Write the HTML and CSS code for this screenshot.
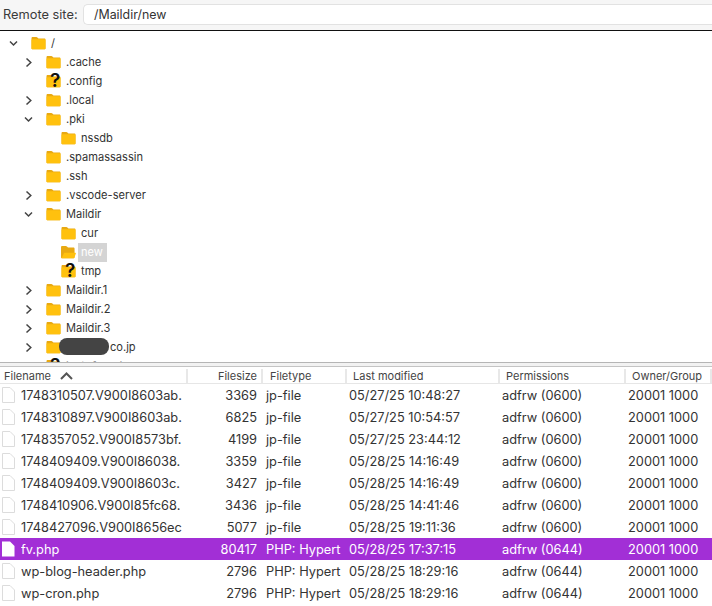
FILE: index.html
```html
<!DOCTYPE html>
<html lang="en">
<head>
<meta charset="UTF-8" />
<meta name="viewport" content="width=device-width, initial-scale=1" />
<title>Remote site</title>
<link rel="stylesheet" href="styles.css">
</head>
<body>

<svg class="defs" width="0" height="0" aria-hidden="true">
  <symbol id="folder" viewBox="0 0 15 15">
    <path d="M0 2.200C0 1.500.5 1 1.200 1h4c.5 0 .8.200 1.100.5L7.500 2.600H13.800c.7 0 1.200.5 1.200 1.200V13c0 .7-.5 1.200-1.200 1.200H1.200C.5 14.200 0 13.700 0 13z" fill="#e8a912"/>
    <path d="M0 4.300C0 3.800.4 3.500.9 3.500H14.100c.5 0 .9.300.9.800V13c0 .7-.5 1.200-1.200 1.200H1.200C.5 14.200 0 13.700 0 13z" fill="#ffc10e"/>
  </symbol>
  <symbol id="folder-open" viewBox="0 0 16 15">
    <path d="M0 2.200C0 1.500.5 1 1.200 1h4c.5 0 .8.200 1.100.5L7.500 2.600H13.300c.7 0 1.200.5 1.200 1.200V13c0 .7-.5 1.200-1.200 1.200H1.200C.5 14.200 0 13.700 0 13z" fill="#e8a912"/>
    <path d="M3.300 8.200H15.300c.5 0 .8.400.6.900L14.300 13.500c-.2.500-.6.700-1.100.7H.6z" fill="#ffc10e"/>
  </symbol>
  <symbol id="doc" viewBox="0 0 14 16">
    <path d="M1.500.5H9L13.500 5V15.500H1.500z" fill="#fff" stroke="#dcdcdc"/>
  </symbol>
  <symbol id="doc-sel" viewBox="0 0 14 16">
    <path d="M1 .5H9L13.500 5V15.500H1z" fill="#fff"/>
  </symbol>
  <symbol id="right" viewBox="0 0 9 11">
    <path d="M2.500 1.500 6.800 5.500 2.500 9.500" fill="none" stroke="#444" stroke-width="1.500"/>
  </symbol>
  <symbol id="down" viewBox="0 0 9 11">
    <path d="M1 3.500 4.500 7 8 3.500" fill="none" stroke="#444" stroke-width="1.500"/>
  </symbol>
</svg>

<div class="sitebar">
  <label class="sitebar-label">Remote site:</label>
  <div class="sitebar-input">/Maildir/new</div>
</div>

<div class="tree">
  <div class="node"><span class="tw"><svg class="arrow"><use href="#down"/></svg></span><svg class="folder"><use href="#folder"/></svg><span class="name">/</span></div>
  <div class="node lv1"><span class="tw"><svg class="arrow"><use href="#right"/></svg></span><svg class="folder"><use href="#folder"/></svg><span class="name">.cache</span></div>
  <div class="node lv1"><span class="tw"></span><span class="unknown"><svg class="folder"><use href="#folder"/></svg><b class="qmark">?</b></span><span class="name">.config</span></div>
  <div class="node lv1"><span class="tw"><svg class="arrow"><use href="#right"/></svg></span><svg class="folder"><use href="#folder"/></svg><span class="name">.local</span></div>
  <div class="node lv1"><span class="tw"><svg class="arrow"><use href="#down"/></svg></span><svg class="folder"><use href="#folder"/></svg><span class="name">.pki</span></div>
  <div class="node lv2"><span class="tw"></span><svg class="folder"><use href="#folder"/></svg><span class="name">nssdb</span></div>
  <div class="node lv1"><span class="tw"></span><svg class="folder"><use href="#folder"/></svg><span class="name">.spamassassin</span></div>
  <div class="node lv1"><span class="tw"></span><svg class="folder"><use href="#folder"/></svg><span class="name">.ssh</span></div>
  <div class="node lv1"><span class="tw"><svg class="arrow"><use href="#right"/></svg></span><svg class="folder"><use href="#folder"/></svg><span class="name">.vscode-server</span></div>
  <div class="node lv1"><span class="tw"><svg class="arrow"><use href="#down"/></svg></span><svg class="folder"><use href="#folder"/></svg><span class="name">Maildir</span></div>
  <div class="node lv2"><span class="tw"></span><svg class="folder"><use href="#folder"/></svg><span class="name">cur</span></div>
  <div class="node lv2"><span class="tw"></span><svg class="folder"><use href="#folder-open"/></svg><span class="name current">new</span></div>
  <div class="node lv2"><span class="tw"></span><span class="unknown"><svg class="folder"><use href="#folder"/></svg><b class="qmark">?</b></span><span class="name">tmp</span></div>
  <div class="node lv1"><span class="tw"><svg class="arrow"><use href="#right"/></svg></span><svg class="folder"><use href="#folder"/></svg><span class="name">Maildir.1</span></div>
  <div class="node lv1"><span class="tw"><svg class="arrow"><use href="#right"/></svg></span><svg class="folder"><use href="#folder"/></svg><span class="name">Maildir.2</span></div>
  <div class="node lv1"><span class="tw"><svg class="arrow"><use href="#right"/></svg></span><svg class="folder"><use href="#folder"/></svg><span class="name">Maildir.3</span></div>
  <div class="node lv1"><span class="tw"><svg class="arrow"><use href="#right"/></svg></span><svg class="folder"><use href="#folder"/></svg><span class="name redacted-name">co.jp</span><span class="blob"></span></div>
  <div class="node lv1"><span class="tw"></span><span class="unknown"><svg class="folder"><use href="#folder"/></svg><b class="qmark">?</b></span><span class="name faded">lost+found</span></div>
</div>

<div class="splitter"></div>

<div class="list-head">
  <div class="col-name">Filename <svg class="sort" viewBox="0 0 13 8"><path d="M1 7 6.500 1.500 12 7" fill="none" stroke="#555" stroke-width="2"/></svg></div>
  <div class="col-size">Filesize</div>
  <div class="col-type">Filetype</div>
  <div class="col-date">Last modified</div>
  <div class="col-perm">Permissions</div>
  <div class="col-own">Owner/Group</div>
</div>

<div class="list">
  <div class="row"><svg class="doc"><use href="#doc"/></svg><span>1748310507.V900I8603ab.</span><span class="size">3369</span><span class="type">jp-file</span><span>05/27/25 10:48:27</span><span>adfrw (0600)</span><span>20001 1000</span></div>
  <div class="row"><svg class="doc"><use href="#doc"/></svg><span>1748310897.V900I8603ab.</span><span class="size">6825</span><span class="type">jp-file</span><span>05/27/25 10:54:57</span><span>adfrw (0600)</span><span>20001 1000</span></div>
  <div class="row"><svg class="doc"><use href="#doc"/></svg><span>1748357052.V900I8573bf.</span><span class="size">4199</span><span class="type">jp-file</span><span>05/27/25 23:44:12</span><span>adfrw (0600)</span><span>20001 1000</span></div>
  <div class="row"><svg class="doc"><use href="#doc"/></svg><span>1748409409.V900I86038.</span><span class="size">3359</span><span class="type">jp-file</span><span>05/28/25 14:16:49</span><span>adfrw (0600)</span><span>20001 1000</span></div>
  <div class="row"><svg class="doc"><use href="#doc"/></svg><span>1748409409.V900I8603c.</span><span class="size">3427</span><span class="type">jp-file</span><span>05/28/25 14:16:49</span><span>adfrw (0600)</span><span>20001 1000</span></div>
  <div class="row"><svg class="doc"><use href="#doc"/></svg><span>1748410906.V900I85fc68.</span><span class="size">3436</span><span class="type">jp-file</span><span>05/28/25 14:41:46</span><span>adfrw (0600)</span><span>20001 1000</span></div>
  <div class="row"><svg class="doc"><use href="#doc"/></svg><span>1748427096.V900I8656ec</span><span class="size">5077</span><span class="type">jp-file</span><span>05/28/25 19:11:36</span><span>adfrw (0600)</span><span>20001 1000</span></div>
  <div class="row selected"><svg class="doc"><use href="#doc-sel"/></svg><span>fv.php</span><span class="size">80417</span><span class="type">PHP: Hypert</span><span>05/28/25 17:37:15</span><span>adfrw (0644)</span><span>20001 1000</span></div>
  <div class="row"><svg class="doc"><use href="#doc"/></svg><span>wp-blog-header.php</span><span class="size">2796</span><span class="type">PHP: Hypert</span><span>05/28/25 18:29:16</span><span>adfrw (0644)</span><span>20001 1000</span></div>
  <div class="row"><svg class="doc"><use href="#doc"/></svg><span>wp-cron.php</span><span class="size">2796</span><span class="type">PHP: Hypert</span><span>05/28/25 18:29:16</span><span>adfrw (0644)</span><span>20001 1000</span></div>
</div>

</body>
</html>
```

FILE: styles.css
```css
html, body {
  margin: 0;
  padding: 0;
  height: 100%;
  overflow: hidden;
}
body {
  background: #fff;
  color: #333;
  font-family: "Inter", "Liberation Sans", sans-serif;
  font-size: 12.8px;
}
.defs {
  display: block;
  height: 0;
}

.sitebar {
  height: 31px;
  box-sizing: border-box;
  display: flex;
  align-items: center;
  padding: 0 0 1px 3px;
  background: #f6f6f6;
  border-bottom: 1px solid #111;
}
.sitebar-label {
  flex: none;
  width: 80px;
  font-size: 12.8px;
  white-space: nowrap;
  color: #3a3a3a;
}
.sitebar-input {
  flex: 1;
  height: 21px;
  line-height: 19px;
  box-sizing: border-box;
  padding-left: 10px;
  background: #fff;
  border: 1px solid #e2e2e2;
  border-right: none;
  border-radius: 5px 0 0 5px;
  font-size: 12.4px;
  color: #333;
}

.tree {
  height: 331px;
  padding-top: 3px;
  box-sizing: border-box;
  overflow: hidden;
  font-size: 11.1px;
}
.node {
  height: 19px;
  display: flex;
  align-items: center;
  padding-left: 8px;
}
.node.lv1 { padding-left: 23px; }
.node.lv2 { padding-left: 38px; }
.tw {
  width: 23px;
  height: 11px;
  flex: none;
}
.arrow {
  display: block;
  width: 9px;
  height: 11px;
  margin-left: 1px;
}
.folder {
  display: block;
  width: 15px;
  height: 14px;
  margin-bottom: 2px;
  flex: none;
}
.name {
  margin-left: 4px;
  padding: 0 3px 0 1px;
  line-height: 19px;
}
.current {
  margin-left: 2px;
  padding: 0 4px 0 3px;
  background: #d4d4d4;
  color: #fff;
}
.unknown {
  position: relative;
  width: 15px;
  height: 16px;
  flex: none;
}
.qmark {
  position: absolute;
  left: 4px;
  top: -3px;
  font-size: 19px;
  line-height: 20px;
  font-weight: 600;
  color: #111;
}
.blob {
  position: absolute;
  left: 59px;
  top: 338px;
  width: 50px;
  height: 17px;
  background: #444;
  border-radius: 8px;
}
.redacted-name {
  margin-left: 49px;
  padding: 0;
}
.faded {
  color: #999;
}

.splitter {
  height: 3px;
  background: #f2f2f2;
  border-top: 1px solid #b5b5b5;
  border-bottom: 1px solid #c4c4c4;
}

.list-head {
  height: 16px;
  display: grid;
  grid-template-columns: 188px 75px 84px 153px 126px 86px;
  background: #fff;
  border-bottom: 1px solid #e6e6e6;
  font-size: 11px;
  color: #444;
}
.list-head > div {
  padding-left: 6px;
  border-right: 2px solid #e8e8e8;
  height: 14px;
  line-height: 14px;
  margin-top: 2px;
  white-space: nowrap;
  overflow: hidden;
}
.list-head > .col-name { padding-left: 4px; }
.list-head > .col-size {
  padding-left: 0;
  padding-right: 4px;
  text-align: right;
}
.list-head > .col-type { padding-left: 7px; }
.sort {
  width: 13px;
  height: 8px;
  margin-left: 6px;
}

.row {
  height: 22px;
  display: grid;
  grid-template-columns: 21px 165px 71px 92px 153px 126px 84px;
  align-items: start;
  white-space: nowrap;
}
.row > span {
  height: 22px;
  line-height: 24px;
  overflow: hidden;
}
.size {
  text-align: right;
}
.type {
  padding-left: 9px;
}
.doc {
  display: block;
  width: 14px;
  height: 16px;
  margin: 3px 0 0 1px;
}
.row.selected {
  background: #a22fd6;
  color: #fff;
}
```
